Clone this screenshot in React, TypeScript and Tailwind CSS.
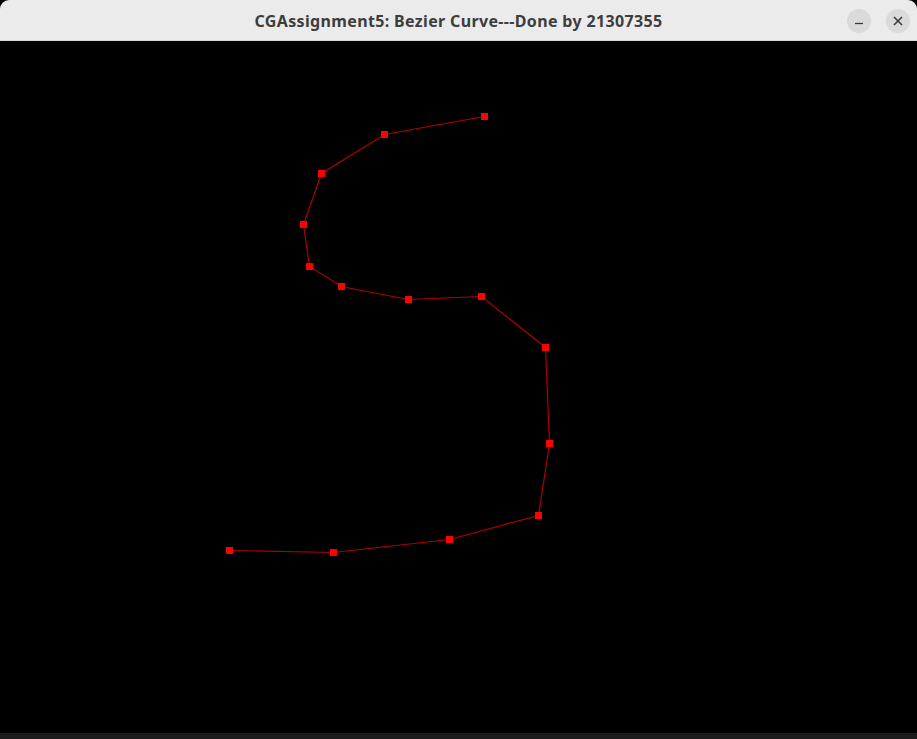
import React from "react";

const pts: [number, number][] = [
  [484, 116],
  [384, 134],
  [321, 173],
  [303, 224],
  [309, 266],
  [341, 286],
  [408, 299],
  [481, 296],
  [545, 347],
  [549, 443],
  [538, 515],
  [449, 539],
  [333, 552],
  [229, 550],
];

const TOP = 41;

export default function App() {
  const local = pts.map(([x, y]) => [x, y - TOP] as [number, number]);
  const poly = local.map(([x, y]) => `${x + 0.5},${y + 0.5}`).join(" ");
  return (
    <div className="w-[917px] h-[739px] bg-black flex flex-col overflow-hidden">
      <div className="h-[41px] shrink-0 bg-[#ebebeb] rounded-t-[9px] border-b border-[#d6d6d6] grid grid-cols-[1fr_auto_1fr] items-center">
        <div />
        <div
          className="text-[16px] font-bold text-[#3d3d3d] tracking-[0.35px] pt-[1px]"
          style={{ fontFamily: '"Noto Sans", "DejaVu Sans", sans-serif' }}
        >
          CGAssignment5: Bezier Curve---Done by 21307355
        </div>
        <div className="flex justify-end items-center gap-[15px] pr-[7px] pt-[1px]">
          <div className="w-[24px] h-[24px] rounded-full bg-[#dadada] flex items-center justify-center">
            <svg width="10" height="10" viewBox="0 0 10 10">
              <line x1="1" y1="7.5" x2="9" y2="7.5" stroke="#3a3a3a" strokeWidth="1.3" />
            </svg>
          </div>
          <div className="w-[24px] h-[24px] rounded-full bg-[#dadada] flex items-center justify-center">
            <svg width="10" height="10" viewBox="0 0 10 10">
              <line x1="1" y1="1" x2="9" y2="9" stroke="#3a3a3a" strokeWidth="1.6" />
              <line x1="9" y1="1" x2="1" y2="9" stroke="#3a3a3a" strokeWidth="1.6" />
            </svg>
          </div>
        </div>
      </div>
      <div className="flex-1 bg-black">
        <svg width="917" height="692" viewBox="0 0 917 692" className="block">
          <polyline points={poly} fill="none" stroke="#b00000" strokeWidth="1.2" />
          {local.map(([x, y], i) => (
            <rect key={i} x={x - 3} y={y - 3} width="7" height="7" fill="#ff0000" shapeRendering="crispEdges" />
          ))}
        </svg>
      </div>
      <div className="h-[6px] shrink-0 bg-[#1c1c1c]" />
    </div>
  );
}
